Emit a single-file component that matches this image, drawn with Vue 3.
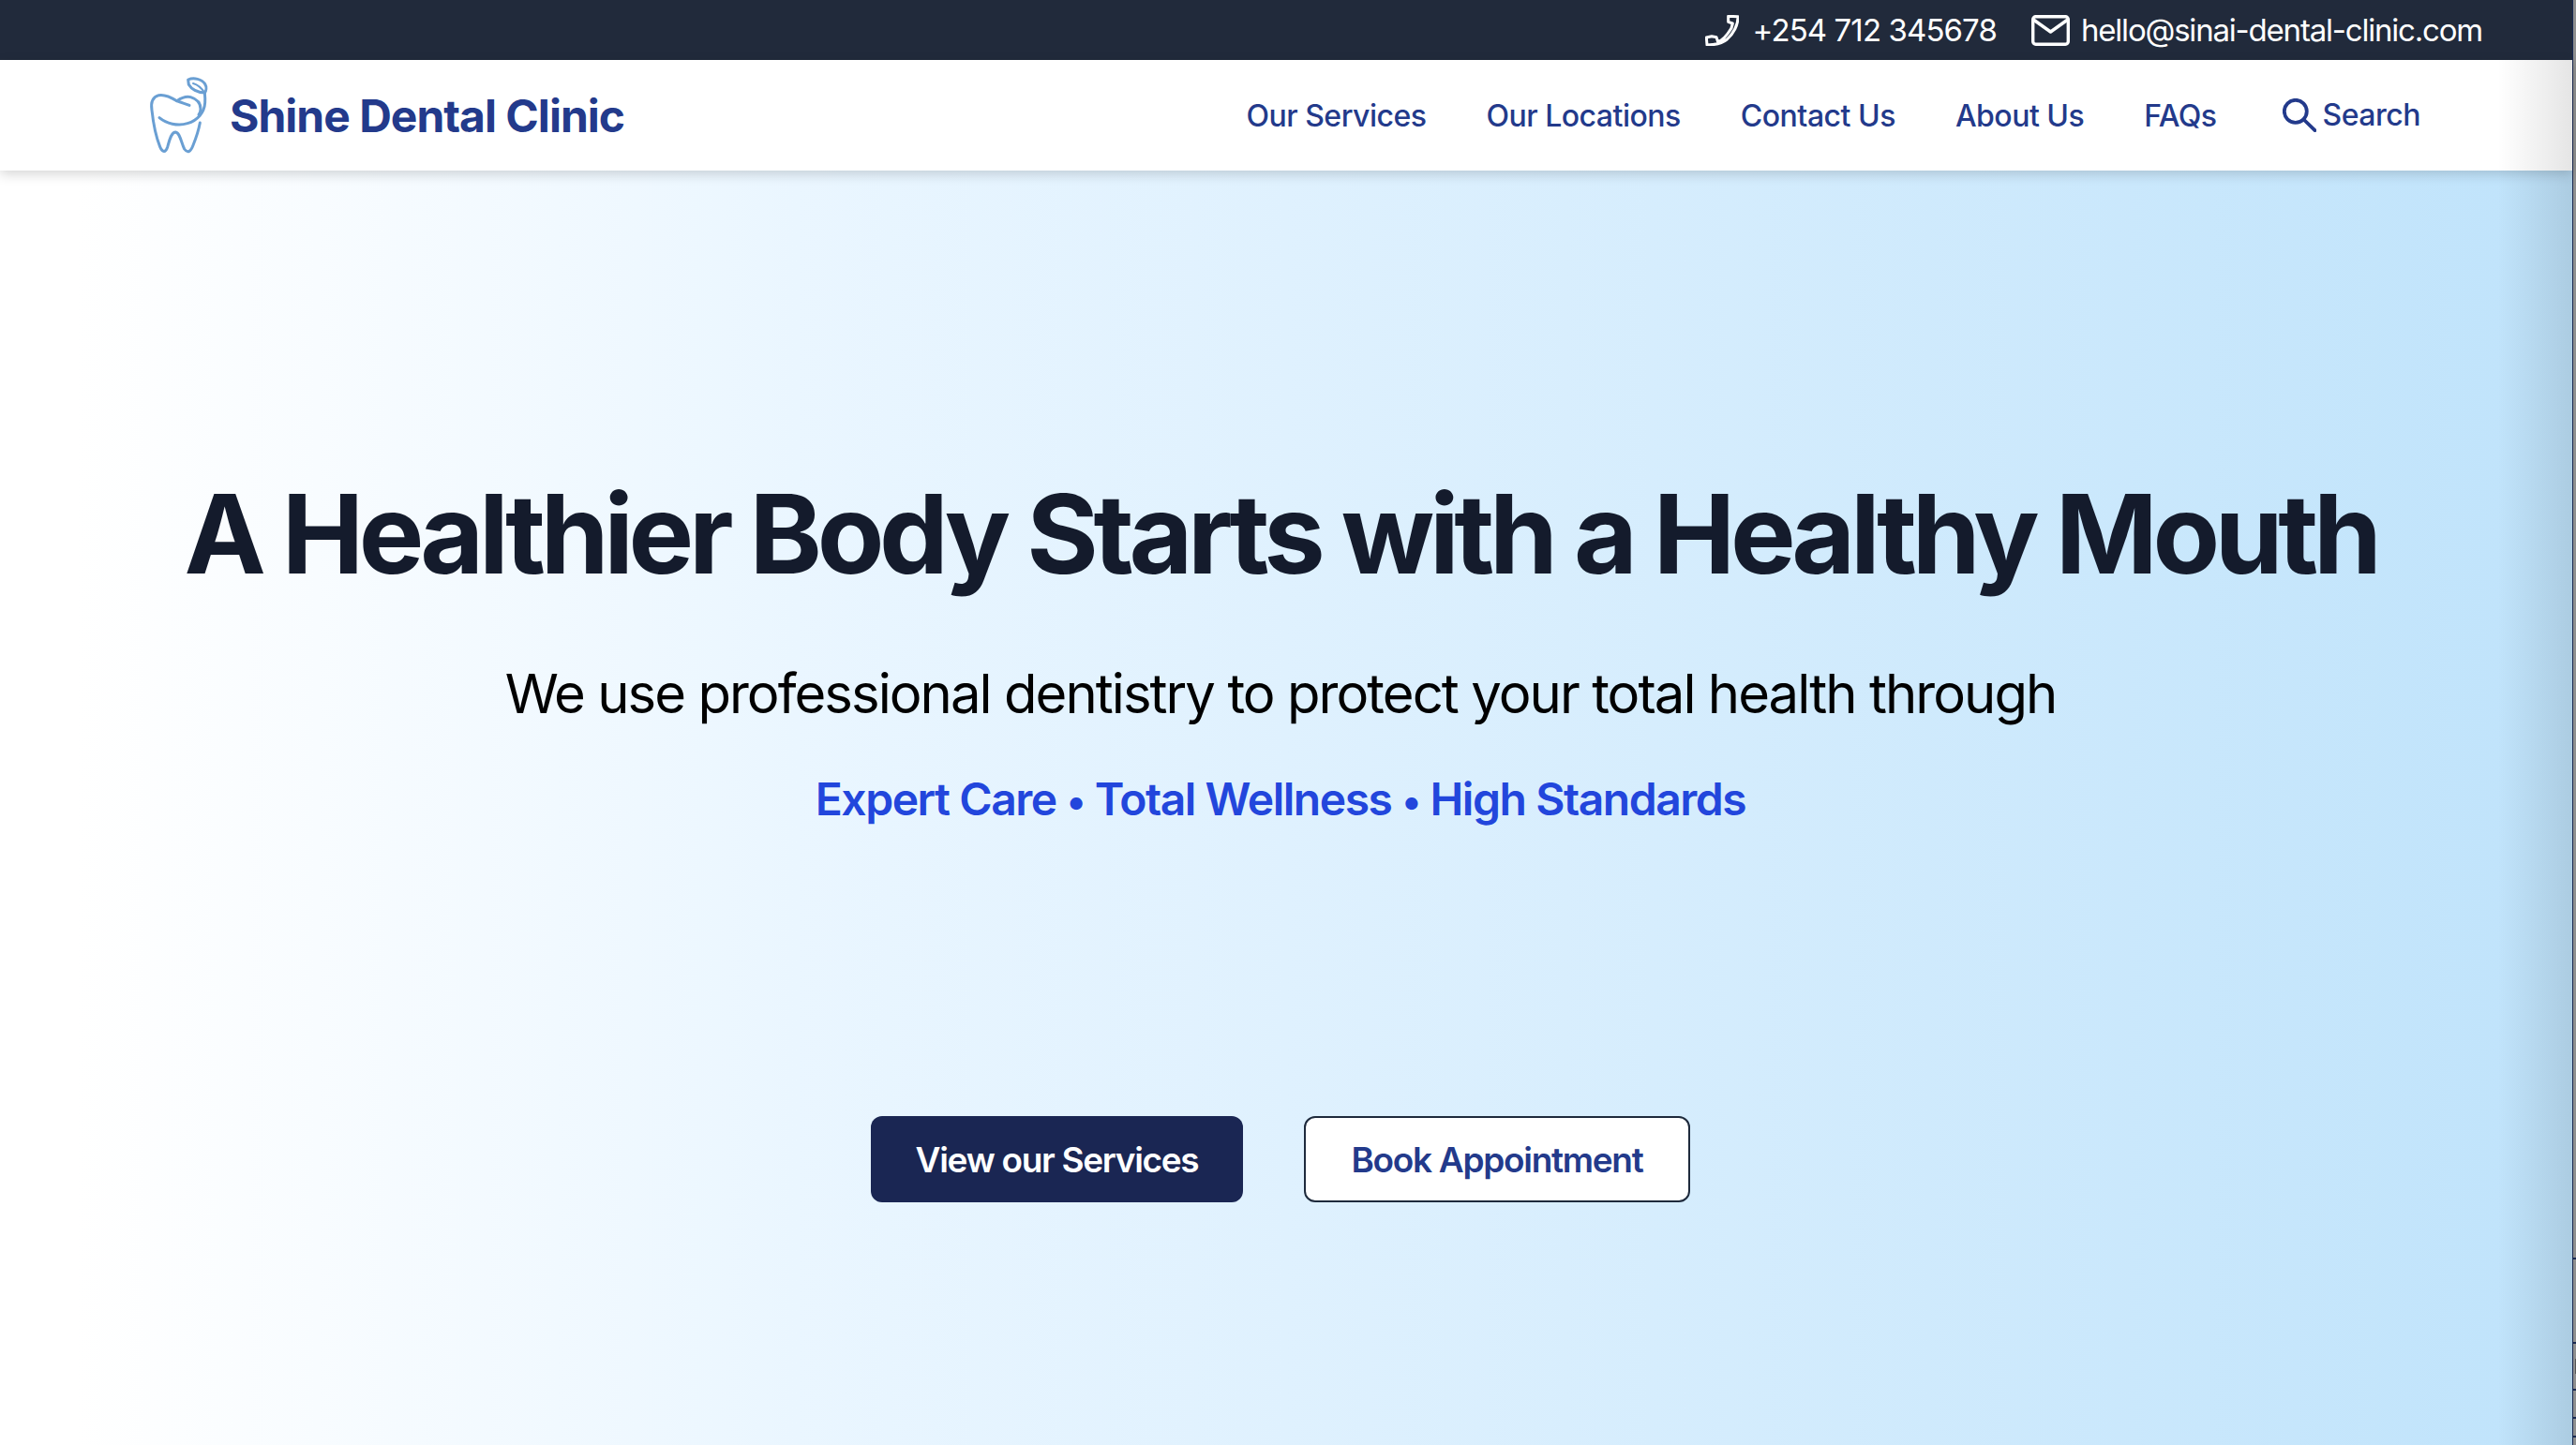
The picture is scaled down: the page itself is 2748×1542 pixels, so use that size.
<template>
  <div class="page">
    <div class="main">
      <div class="topbar">
        <a class="contact phone">
          <svg class="phone-icon" viewBox="0 0 108 99" fill="none" stroke="#fff" stroke-width="9" stroke-linejoin="round" stroke-linecap="round">
            <path d="M74 4 L105 5 C106 32 90 60 70 78 C55 90 40 96 6 96 L4 72 L21 68 L36 71 L41 86 C58 80 72 62 84 42 L88 27 L74 22 Z" />
          </svg>
          <span>+254 712 345678</span>
        </a>
        <a class="contact email">
          <svg class="mail-icon" viewBox="0 0 41 33" fill="none" stroke="#fff" stroke-width="3.4" stroke-linejoin="round" stroke-linecap="round">
            <rect x="1.7" y="1.7" width="37.6" height="29.6" rx="3" />
            <path d="M3 5.5 L20.5 18 L38 5.5" />
          </svg>
          <span>hello@sinai-dental-clinic.com</span>
        </a>
      </div>

      <header class="navbar">
        <div class="brand">
          <svg class="logo" viewBox="0 0 252 288" fill="none" stroke="#6a9fd3" stroke-width="9" stroke-linecap="round" stroke-linejoin="round">
            <path d="M156 112 C146 108 128 103 116 98 C100 88 78 76 58 80 C38 86 32 104 36 128 C40 165 50 215 62 245 C70 264 80 264 86 246 C92 225 98 198 112 198 C126 200 130 232 140 252 C150 266 160 262 168 240 C178 215 186 190 190 168" />
            <path d="M116 98 C128 90 145 82 160 86 C180 92 192 106 192 124 C192 132 190 138 186 142" />
            <path d="M60 152 C82 170 118 180 150 170 C182 160 204 136 206 104 C207 92 206 82 205 72" />
            <path d="M152 30 C170 22 196 28 206 44 C212 54 210 66 205 72 C182 72 162 60 154 46 Z" />
            <path d="M168 42 C182 46 196 58 205 72" stroke-width="6" />
          </svg>
          <span class="brand-name">Shine Dental Clinic</span>
        </div>
        <nav class="nav">
          <a v-for="link in links" :key="link" class="nav-link">{{ link }}</a>
          <a class="nav-link search">
            <svg class="search-icon" viewBox="0 0 36 36" fill="none" stroke="#233a8b" stroke-width="3.8" stroke-linecap="round">
              <circle cx="13.8" cy="13.8" r="12" />
              <path d="M22.5 22.5 L34.5 34.2" />
            </svg>
            <span>Search</span>
          </a>
        </nav>
      </header>

      <section class="hero">
        <h1>A Healthier Body Starts with a Healthy Mouth</h1>
        <p class="lead">We use professional dentistry to protect your total health through</p>
        <p class="pillars">Expert Care <i>•</i> Total Wellness <i>•</i> High Standards</p>
        <div class="actions">
          <button class="btn primary">View our Services</button>
          <button class="btn outline">Book Appointment</button>
        </div>
      </section>
    </div>
    <div class="edge"></div>
  </div>
</template>

<script setup>
const links = ["Our Services", "Our Locations", "Contact Us", "About Us", "FAQs"];
</script>

<style>
html,
body {
  margin: 0;
  background: #8f8f8f;
  overflow: hidden;
}
</style>

<style scoped>
.page {
  display: flex;
  width: 2748px;
  height: 1542px;
  overflow: hidden;
  font-family: Inter, "Liberation Sans", sans-serif;
}
.main {
  position: relative;
  flex: 1;
  display: flex;
  flex-direction: column;
  min-width: 0;
}
.main::after {
  content: "";
  position: absolute;
  top: 64px;
  right: 0;
  bottom: 0;
  width: 80px;
  background: linear-gradient(to right, rgba(0, 0, 0, 0), rgba(0, 0, 0, 0.1));
  pointer-events: none;
  z-index: 3;
}
.edge {
  width: 4px;
  flex: none;
  border-left: 1px solid #1a2a52;
  box-sizing: border-box;
  background-color: #8f8f8f;
  background-image:
    linear-gradient(#1a2a52, #1a2a52), linear-gradient(#1a2a52, #1a2a52),
    linear-gradient(#1a2a52, #1a2a52), linear-gradient(#1a2a52, #1a2a52),
    linear-gradient(#1a2a52, #1a2a52), linear-gradient(#555, #555);
  background-repeat: no-repeat;
  background-size: 100% 2px, 100% 2px, 100% 2px, 100% 2px, 100% 2px, 1px 16px;
  background-position: 0 1342px, 0 1432px, 0 1482px, 0 1512px, 0 1532px, 100% 1450px;
}
.topbar {
  height: 64px;
  flex: none;
  display: flex;
  justify-content: flex-end;
  align-items: center;
  gap: 37px;
  padding-right: 96px;
  background: #212a3b;
  color: #fff;
  font-size: 33px;
}
.contact {
  display: flex;
  align-items: center;
  gap: 12px;
}
.phone {
  gap: 15px;
  letter-spacing: -0.9px;
}
.email {
  letter-spacing: -1.2px;
}
.phone-icon {
  width: 36px;
  height: 33px;
}
.mail-icon {
  width: 41px;
  height: 33px;
}
.navbar {
  position: relative;
  z-index: 2;
  height: 118px;
  flex: none;
  display: flex;
  align-items: center;
  justify-content: space-between;
  padding: 0 162px 0 150px;
  background: #fff;
  box-shadow: 0 4px 12px rgba(0, 0, 0, 0.16);
}
.brand {
  display: flex;
  align-items: center;
  gap: 11px;
}
.logo {
  width: 84px;
  height: 96px;
}
.brand-name {
  font-size: 48px;
  font-weight: 700;
  letter-spacing: -1px;
  color: #233a8b;
}
.nav {
  display: flex;
  align-items: center;
  gap: 64px;
}
.nav-link {
  font-size: 32px;
  font-weight: 500;
  letter-spacing: -0.5px;
  color: #233a8b;
}
.search {
  display: flex;
  align-items: center;
  gap: 7px;
  margin-left: 6px;
}
.search span {
  margin-top: -2px;
}
.search-icon {
  width: 36px;
  height: 36px;
}
.hero {
  flex: 1;
  display: flex;
  flex-direction: column;
  align-items: center;
  padding-right: 12px;
  background: linear-gradient(to right, #fff 3%, #eaf6ff 31%, #dff1fe 50%, #bfe3fb 100%);
}
h1 {
  margin: 329px 0 0;
  font-size: 117px;
  line-height: 1;
  font-weight: 700;
  letter-spacing: -5.35px;
  color: #141b2c;
}
.lead {
  margin: 76px 0 0;
  font-size: 58px;
  line-height: 72px;
  letter-spacing: -1.95px;
  color: #000;
}
.pillars {
  margin: 47px 0 0;
  font-size: 48px;
  line-height: 60px;
  font-weight: 600;
  letter-spacing: -1.45px;
  color: #2246dc;
}
.pillars i {
  font-style: normal;
  font-size: 42px;
}
.actions {
  display: flex;
  gap: 65px;
  margin-top: 306px;
}
.btn {
  height: 92px;
  border-radius: 12px;
  font-family: inherit;
  font-size: 37px;
  font-weight: 600;
  letter-spacing: -1.3px;
  box-sizing: border-box;
}
.primary {
  width: 397px;
  border: none;
  background: #1a2653;
  color: #fff;
}
.outline {
  width: 412px;
  border: 2px solid #1e2a3c;
  background: #fff;
  color: #233a8b;
}
</style>
